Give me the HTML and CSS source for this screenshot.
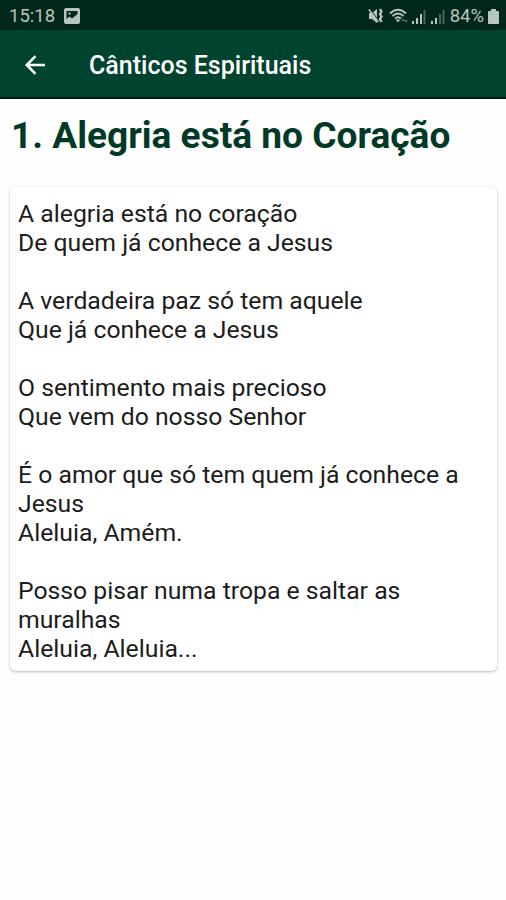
FILE: index.html
```html
<!DOCTYPE html>
<html lang="pt">
<head>
  <meta charset="UTF-8" />
  <meta name="viewport" content="width=device-width,initial-scale=1.0" />
  <title>Cânticos Espirituais</title>
  <link rel="stylesheet" href="styles.css">
</head>
<body>
  <div class="status-bar">
    <span class="clock">15:18</span>
    <svg class="icon-picture" width="16" height="16" viewBox="0 0 16 16">
      <path fill="currentColor" fill-rule="evenodd" d="M2 0h12a2 2 0 0 1 2 2v12a2 2 0 0 1-2 2H2a2 2 0 0 1-2-2V2a2 2 0 0 1 2-2zM2.500 3v8l3-2.500 2.500 2 5.500-4.500V3zM4.500 4.500h2v2h-2z" />
    </svg>
    <div class="status-icons">
      <svg class="icon-mute" width="16" height="16" viewBox="0 0 16 16">
        <path fill="currentColor" d="M1 5h3l5-4v14l-5-4H1z" />
        <path fill="none" stroke="#02271b" stroke-width="1" d="M2 1l9 12" />
        <path fill="none" stroke="currentColor" stroke-width="1.500" d="M0.800 1.500l9.500 12.500" />
        <path fill="none" stroke="currentColor" stroke-width="2.400" d="M12 1l1.500 2.500-1.500 2.500 1.500 2.500-1.500 2.500 1.500 3" />
      </svg>
      <svg class="icon-wifi" width="20" height="16" viewBox="0 0 20 16">
        <g fill="none" stroke="currentColor" stroke-width="1.900">
          <path d="M1 5.500Q9 -2 17 5.500" />
          <path d="M3.500 8Q9 3 14.500 8" />
          <path d="M6 10.500Q9 8 12 10.500" />
        </g>
        <path fill="currentColor" d="M7 12q2-1.500 4 0l-2 2.500z" />
        <path fill="#49685d" d="M12 13l2-3 2 3zM15 12h4l-2 3z" />
      </svg>
      <svg class="icon-signal" width="14" height="15" viewBox="0 0 14 15">
        <path fill="currentColor" d="M0 12h2v3H0zM4 9h2v6H4zM8 5h2v10H8z" />
        <path fill="#49685d" d="M11.500 1h2v14h-2z" />
      </svg>
      <svg class="icon-signal" width="14" height="15" viewBox="0 0 14 15">
        <path fill="currentColor" d="M0 12h2v3H0zM4 9h2v6H4z" />
        <path fill="#49685d" d="M8 5h2v10H8zM11.500 1h2v14h-2z" />
      </svg>
      <span class="battery-level">84%</span>
      <svg class="icon-battery" width="11" height="15" viewBox="0 0 11 15">
        <path fill="currentColor" d="M3 0h5v2h2a1 1 0 0 1 1 1v11a1 1 0 0 1-1 1H1a1 1 0 0 1-1-1V3a1 1 0 0 1 1-1h2z" />
      </svg>
    </div>
  </div>

  <header class="app-bar">
    <svg class="back" width="22" height="20" viewBox="0 0 22 20">
      <path fill="none" stroke="currentColor" stroke-width="2.500" d="M21 10H3M11.500 1.200L2.700 10l8.800 8.800" />
    </svg>
    <span class="app-title">Cânticos Espirituais</span>
  </header>

  <main class="content">
    <h1 class="song-title">1. Alegria está no Coração</h1>
    <div class="card">
      <p>A alegria está no coração<br>De quem já conhece a Jesus</p>
      <p>A verdadeira paz só tem aquele<br>Que já conhece a Jesus</p>
      <p>O sentimento mais precioso<br>Que vem do nosso Senhor</p>
      <p>É o amor que só tem quem já conhece a Jesus<br>Aleluia, Amém.</p>
      <p>Posso pisar numa tropa e saltar as muralhas<br>Aleluia, Aleluia...</p>
    </div>
  </main>
</body>
</html>
```

FILE: styles.css
```css
:root {
  --color-primary: #00432f;
  --color-status: #02271b;
  --color-title: #003a27;
  --color-text: #1c1c1c;
}

* {
  box-sizing: border-box;
}

body {
  margin: 0;
  min-height: 900px;
  font-family: Roboto, sans-serif;
  background: #fefefe;
  color: var(--color-text);
}

.status-bar {
  display: flex;
  align-items: center;
  height: 30px;
  padding: 2px 7px 0 9px;
  background: var(--color-status);
  color: #b9c5bf;
  font-size: 18.5px;
}

.icon-picture {
  margin-left: 9px;
}

.status-icons {
  display: flex;
  align-items: center;
  margin-left: auto;
}

.icon-wifi {
  margin: 0 3px 0 5px;
}

.icon-signal {
  margin-right: 5px;
}

.icon-battery {
  margin-left: 4px;
}

.app-bar {
  display: flex;
  align-items: center;
  height: 69px;
  padding: 2px 24px 0;
  background: var(--color-primary);
  border-bottom: 2px solid #001a10;
  color: #fff;
}

.app-title {
  margin-left: 43px;
  font-size: 25px;
  font-weight: 500;
  padding-top: 1px;
}

.content {
  padding: 15px 9px 0 10px;
}

.song-title {
  margin: 0 0 29px 1px;
  font-size: 37.1px;
  line-height: 44px;
  font-weight: 700;
  color: var(--color-title);
}

.card {
  padding: 12px 8px 8px;
  border-radius: 6px;
  background: #fff;
  box-shadow: 0 1px 3px rgba(0, 0, 0, 0.28);
  font-size: 24.75px;
  line-height: 29.03px;
}

.card p {
  margin: 0 0 29.03px;
}

.card p:last-child {
  margin-bottom: 0;
}
```
